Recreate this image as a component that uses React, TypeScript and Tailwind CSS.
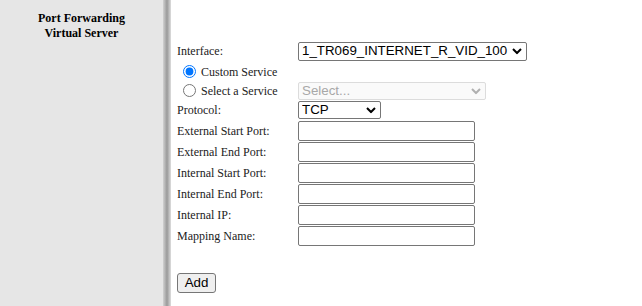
import React from 'react';

function Chevron({ color = '#000' }: { color?: string }) {
  return (
    <svg className="pointer-events-none absolute right-[5px] top-1/2 -translate-y-1/2" width="10" height="7" viewBox="0 0 10 7">
      <path d="M1 1.5l4 4 4-4" fill="none" stroke={color} strokeWidth="2" />
    </svg>
  );
}

interface SelectBoxProps {
  value: string;
  width: string;
  height: string;
  disabled?: boolean;
}

function SelectBox({ value, width, height, disabled }: SelectBoxProps) {
  return (
    <div className={`relative ${width} ${height}`}>
      <select
        disabled={disabled}
        defaultValue={value}
        className={
          disabled
            ? 'appearance-none w-full h-full pl-[3px] text-[13.33px] leading-none font-["Liberation_Sans",Arial,sans-serif] text-[#a8a8a8] bg-[#fafafa] border border-[#dcdcdc] rounded-[2px]'
            : 'appearance-none w-full h-full pl-[3px] text-[13.33px] leading-none font-["Liberation_Sans",Arial,sans-serif] text-black bg-white border border-[#767676] rounded-[2px]'
        }
      >
        <option>{value}</option>
      </select>
      <Chevron color={disabled ? '#b0b0b0' : '#000'} />
    </div>
  );
}

function FieldRow({ label }: { label: string }) {
  return (
    <div className="flex items-center h-[21px]">
      <div className="w-[121px]">{label}</div>
      <input type="text" className="w-[177px] h-[20px] px-[2px] bg-white border border-[#767676] rounded-[2px]" />
    </div>
  );
}

export default function App() {
  const fields = [
    'External Start Port:',
    'External End Port:',
    'Internal Start Port:',
    'Internal End Port:',
    'Internal IP:',
    'Mapping Name:',
  ];

  return (
    <div className="flex w-[642px] h-[306px] bg-white font-['Liberation_Serif','Times_New_Roman',serif] text-[12px] text-[#222]">
      <div className="w-[163px] h-full bg-[#e6e6e6] pt-[11px]">
        <div className="text-center font-bold text-black leading-[15px]">
          Port Forwarding
          <br />
          Virtual Server
        </div>
      </div>
      <div className="w-[8px] h-full bg-gradient-to-r from-[#d2d2d2] via-[#9a9a9a] to-[#dedede]" />

      <div className="flex-1 pl-[6px] pt-[40px]">
        <div className="flex items-center h-[22px]">
          <div className="w-[121px]">Interface:</div>
          <SelectBox value="1_TR069_INTERNET_R_VID_100" width="w-[229px]" height="h-[19px]" />
        </div>

        <div className="flex items-center h-[19px]">
          <label className="flex items-center gap-[5px] pl-[6px] w-[121px]">
            <input type="radio" name="svc" defaultChecked className="m-0 w-[13px] h-[13px] accent-[#0075ff]" />
            <span>Custom Service</span>
          </label>
        </div>

        <div className="flex items-center h-[19px]">
          <label className="flex items-center gap-[5px] pl-[6px] w-[121px]">
            <input type="radio" name="svc" className="m-0 w-[13px] h-[13px]" />
            <span>Select a Service</span>
          </label>
          <SelectBox value="Select..." width="w-[188px]" height="h-[18px]" disabled />
        </div>

        <div className="flex items-center h-[20px]">
          <div className="w-[121px]">Protocol:</div>
          <SelectBox value="TCP" width="w-[83px]" height="h-[18px]" />
        </div>

        {fields.map((f) => (
          <FieldRow key={f} label={f} />
        ))}

        <div className="pt-[27px]">
          <button className="w-[39px] h-[20px] bg-[#efefef] border border-[#767676] rounded-[3px] text-[13.33px] leading-none font-['Liberation_Sans',Arial,sans-serif] text-black">
            Add
          </button>
        </div>
      </div>
    </div>
  );
}
